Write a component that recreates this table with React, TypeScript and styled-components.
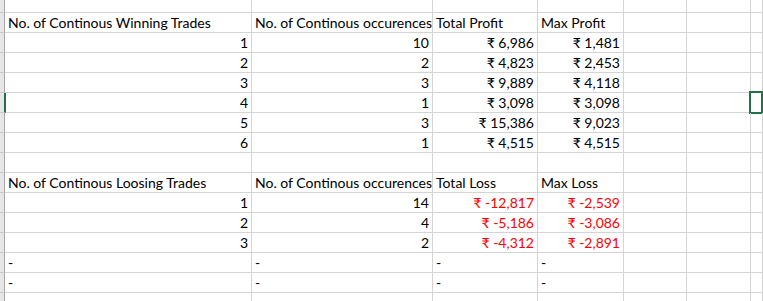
import React from "react";
import styled, { createGlobalStyle } from "styled-components";

const GlobalStyle = createGlobalStyle`
  html, body {
    margin: 0;
    padding: 0;
    background: #ffffff;
    overflow: hidden;
  }
  body {
    font-family: Lato, "Liberation Sans", sans-serif;
    font-size: 14px;
    color: #000000;
  }
`;

type Align = "left" | "right";

const COLS = "5px 247px 181px 105px 86px 63px 64px 1fr";

const Sheet = styled.div`
  display: grid;
  grid-template-columns: ${COLS};
  grid-auto-rows: 20px;
  width: 763px;
  height: 301px;
  overflow: hidden;
`;

const Row = styled.div<{ $h?: number }>`
  display: contents;
`;

const RowHead = styled.div<{ $h: number; $active?: boolean }>`
  height: ${(p) => p.$h}px;
  box-sizing: border-box;
  background: #e6e6e6;
  border-bottom: 1px solid #c8c8c8;
  border-right: ${(p) => (p.$active ? "2px solid #217346" : "1px solid #a6a6a6")};
  margin-right: ${(p) => (p.$active ? "-1px" : "0")};
  position: relative;
  z-index: 1;
`;

const Cell = styled.div<{ $h: number; $align?: Align; $red?: boolean; $selected?: boolean }>`
  height: ${(p) => p.$h}px;
  box-sizing: border-box;
  border-right: 1px solid #d4d4d4;
  border-bottom: 1px solid #d4d4d4;
  display: flex;
  align-items: flex-end;
  justify-content: ${(p) => (p.$align === "right" ? "flex-end" : "flex-start")};
  padding: 0 3px 1px 3px;
  white-space: nowrap;
  line-height: 17px;
  color: ${(p) => (p.$red ? "#ff0000" : "#000000")};
  position: relative;

  &::after {
    content: "";
    display: ${(p) => (p.$selected ? "block" : "none")};
    position: absolute;
    top: -2px;
    left: -2px;
    right: -1px;
    bottom: -2px;
    border: 2px solid #217346;
  }
`;

type CellData = { text?: string; align?: Align; red?: boolean };

const head = (a: string, b: string, c: string, d: string): CellData[] => [
  { text: a },
  { text: b },
  { text: c },
  { text: d },
];

const win = (n: number, occ: number, total: string, max: string): CellData[] => [
  { text: String(n), align: "right" },
  { text: String(occ), align: "right" },
  { text: "₹ " + total, align: "right" },
  { text: "₹ " + max, align: "right" },
];

const loss = (n: number, occ: number, total: string, max: string): CellData[] => [
  { text: String(n), align: "right" },
  { text: String(occ), align: "right" },
  { text: "₹ " + total, align: "right", red: true },
  { text: "₹ " + max, align: "right", red: true },
];

const dash: CellData[] = [{ text: "-" }, { text: "-" }, { text: "-" }, { text: "-" }];

const rows: { h: number; cells: CellData[] }[] = [
  { h: 13, cells: [] },
  { h: 20, cells: head("No. of Continous Winning Trades", "No. of Continous occurences", "Total Profit", "Max Profit") },
  { h: 20, cells: win(1, 10, "6,986", "1,481") },
  { h: 20, cells: win(2, 2, "4,823", "2,453") },
  { h: 20, cells: win(3, 3, "9,889", "4,118") },
  { h: 20, cells: win(4, 1, "3,098", "3,098") },
  { h: 20, cells: win(5, 3, "15,386", "9,023") },
  { h: 20, cells: win(6, 1, "4,515", "4,515") },
  { h: 20, cells: [] },
  { h: 20, cells: head("No. of Continous Loosing Trades", "No. of Continous occurences", "Total Loss", "Max Loss") },
  { h: 20, cells: loss(1, 14, "-12,817", "-2,539") },
  { h: 20, cells: loss(2, 4, "-5,186", "-3,086") },
  { h: 20, cells: loss(3, 2, "-4,312", "-2,891") },
  { h: 20, cells: dash },
  { h: 20, cells: dash },
  { h: 20, cells: [] },
];

const ACTIVE_ROW = 5;
const COL_COUNT = 7;

export default function App() {
  return (
    <>
      <GlobalStyle />
      <Sheet style={{ gridTemplateRows: rows.map((r) => r.h + "px").join(" ") }}>
        {rows.map((row, ri) => (
          <Row key={ri}>
            <RowHead $h={row.h} $active={ri === ACTIVE_ROW} />
            {Array.from({ length: COL_COUNT }).map((_, ci) => {
              const c = row.cells[ci];
              return (
                <Cell
                  key={ci}
                  $h={row.h}
                  $align={c?.align}
                  $red={c?.red}
                  $selected={ri === ACTIVE_ROW && ci === 6}
                >
                  {c?.text}
                </Cell>
              );
            })}
          </Row>
        ))}
      </Sheet>
    </>
  );
}
